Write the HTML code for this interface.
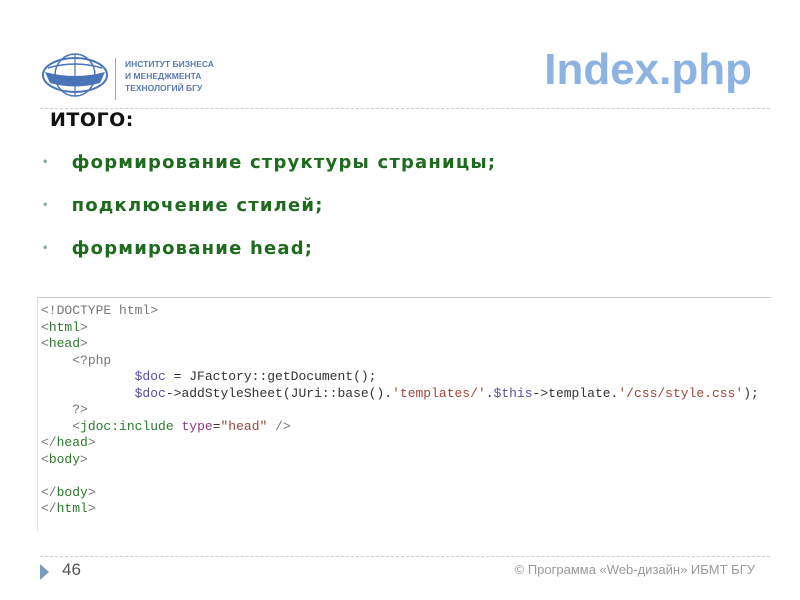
<!DOCTYPE html>
<html><head><meta charset="utf-8"><style>
body{margin:0;width:800px;height:600px;background:#fff;position:relative;overflow:hidden;font-family:"DejaVu Sans",Verdana,sans-serif}
.a{position:absolute}
.code{font-family:"Liberation Mono",monospace;font-size:13px;line-height:16.5px;color:#333;white-space:pre}
.t{color:#2d7a2d}.g{color:#777}.v{color:#5a4fa8}.s{color:#a0453a}.at{color:#8a3a8a}
</style></head><body>
<svg class="a" style="left:40px;top:50px" width="70" height="50" viewBox="0 0 70 50">
<ellipse cx="35" cy="25" rx="32" ry="17" fill="none" stroke="#4a74b8" stroke-width="2"/>
<ellipse cx="35" cy="25" rx="20" ry="21" fill="none" stroke="#4a74b8" stroke-width="1.5"/>
<path d="M5 22 Q35 30 65 22 L60 33 Q35 40 10 33Z" fill="#4a74b8"/>
<path d="M8 18 Q35 10 62 18" fill="none" stroke="#4a74b8" stroke-width="1.5"/>
<line x1="35" y1="4" x2="35" y2="46" stroke="#4a74b8" stroke-width="1.2"/>
</svg>
<div class="a" style="left:115px;top:58px;width:1px;height:42px;background:#9ab"></div>
<div class="a" style="left:125px;top:58px;font-family:'Liberation Sans',sans-serif;font-size:8.5px;line-height:12px;color:#5a7bb0;font-weight:bold">ИНСТИТУТ БИЗНЕСА<br>И МЕНЕДЖМЕНТА<br>ТЕХНОЛОГИЙ БГУ</div>
<div class="a" style="left:40px;top:108px;width:730px;border-top:1px dashed #c8d0dc"></div>
<div class="a" style="right:48px;top:45px;font-family:'Liberation Sans',sans-serif;font-weight:bold;font-size:44px;color:#8db3e2">Index.php</div>
<div class="a" style="left:50px;top:109px;font-weight:bold;font-size:19px;letter-spacing:0.5px;color:#111">ИТОГО:</div>
<div class="a" style="left:42px;top:141px;font-weight:bold;font-size:18px;letter-spacing:1.2px;color:#1e6a1e;line-height:43px">
<div><span style="color:#8aa;font-size:10px;margin-right:22px;vertical-align:3px">•</span>формирование структуры страницы;</div>
<div><span style="color:#8aa;font-size:10px;margin-right:22px;vertical-align:3px">•</span>подключение стилей;</div>
<div><span style="color:#8aa;font-size:10px;margin-right:22px;vertical-align:3px">•</span>формирование head;</div>
</div>
<div class="a" style="left:37px;top:297px;width:733px;height:233px;border-top:1px solid #ccc;border-left:1px solid #ddd"></div>
<div class="a code" style="left:41px;top:303px"><span class="g">&lt;!DOCTYPE html&gt;</span>
<span class="g">&lt;</span><span class="t">html</span><span class="g">&gt;</span>
<span class="g">&lt;</span><span class="t">head</span><span class="g">&gt;</span>
    <span class="g">&lt;?php</span>
            <span class="v">$doc</span> = JFactory::getDocument();
            <span class="v">$doc</span>-&gt;addStyleSheet(JUri::base().<span class="s">'templates/'</span>.<span class="v">$this</span>-&gt;template.<span class="s">'/css/style.css'</span>);
    <span class="g">?&gt;</span>
    <span class="g">&lt;</span><span class="t">jdoc:include</span> <span class="at">type</span>=<span class="s">"head"</span> <span class="g">/&gt;</span>
<span class="g">&lt;/</span><span class="t">head</span><span class="g">&gt;</span>
<span class="g">&lt;</span><span class="t">body</span><span class="g">&gt;</span>

<span class="g">&lt;/</span><span class="t">body</span><span class="g">&gt;</span>
<span class="g">&lt;/</span><span class="t">html</span><span class="g">&gt;</span></div>
<div class="a" style="left:40px;top:556px;width:730px;border-top:1px dashed #c8d0dc"></div>
<svg class="a" style="left:40px;top:564px" width="10" height="16"><path d="M0 0L9 8L0 16Z" fill="#7a9cc0"/></svg>
<div class="a" style="left:62px;top:560px;font-family:'Liberation Sans',sans-serif;font-size:17px;color:#555">46</div>
<div class="a" style="right:45px;top:562px;font-family:'Liberation Sans',sans-serif;font-size:13px;color:#999">© Программа «Web-дизайн» ИБМТ БГУ</div>
</body></html>
